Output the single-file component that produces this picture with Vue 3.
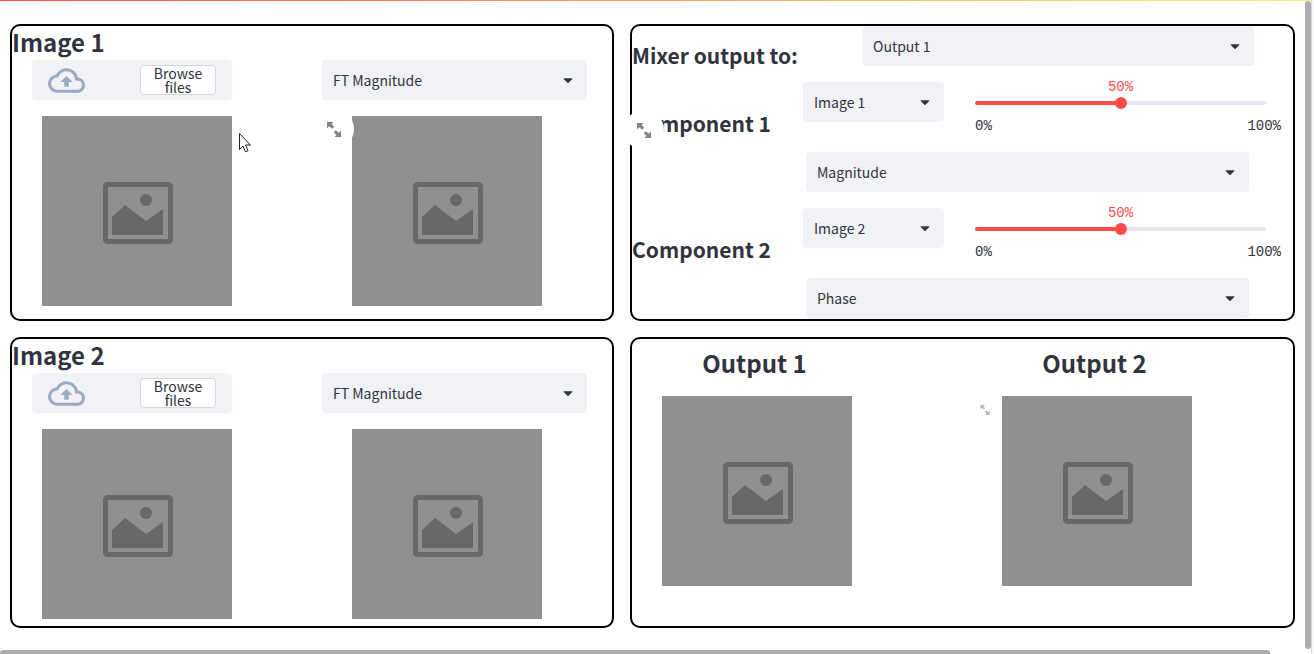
<script setup>
import { reactive } from 'vue'

const images = reactive([
  { title: 'Image 1', view: 'FT Magnitude', expand: true },
  { title: 'Image 2', view: 'FT Magnitude', expand: false },
])
const views = ['FT Magnitude', 'FT Phase', 'FT Real', 'FT Imaginary']
const outputs = ['Output 1', 'Output 2']
const parts = ['Magnitude', 'Phase', 'Real', 'Imaginary']
const mixer = reactive({
  target: 'Output 1',
  components: [
    { name: 'Component 1', source: 'Image 1', part: 'Magnitude', ratio: 50 },
    { name: 'Component 2', source: 'Image 2', part: 'Phase', ratio: 50 },
  ],
})
const caret =
  'M12.7 15.3L17.15 10.85C17.46 10.54 17.24 10 16.8 10L7.2 10C6.76 10 6.54 10.54 6.85 10.85L11.3 15.3C11.68 15.68 12.32 15.68 12.7 15.3Z'
const expandIcon = 'M0 0H6.5L4.6 1.9L7.2 4.8L5.2 6.8L2.2 4.2L0 6.5ZM14 15H7.5L9.4 13.1L6.8 10.2L8.8 8.2L11.8 10.8L14 8.5Z'
const cloud =
  'M19.35 10.04A7.49 7.49 0 0012 4C9.11 4 6.6 5.64 5.35 8.04A5.994 5.994 0 000 14c0 3.31 2.69 6 6 6h13c2.76 0 5-2.24 5-5 0-2.64-2.05-4.78-4.65-4.96zM19 18H6c-2.21 0-4-1.79-4-4 0-2.05 1.53-3.76 3.56-3.97l1.07-.11.5-.95A5.469 5.469 0 0112 6c2.62 0 4.88 1.86 5.39 4.43l.3 1.5 1.53.11A2.98 2.98 0 0122 15c0 1.65-1.35 3-3 3zM8 13h2.55v3h2.9v-3H16l-4-4z'
</script>

<template>
  <div class="page">
    <div class="decoration"></div>
    <main class="board">
      <div class="column">
        <section v-for="image in images" :key="image.title" class="panel source">
          <h2>{{ image.title }}</h2>
          <div class="halves">
            <div class="half">
              <div class="uploader">
                <svg class="cloud" viewBox="0 0 24 24"><path :d="cloud" /></svg>
                <button type="button" class="browse">Browse files</button>
              </div>
              <div class="picture original">
                <svg viewBox="0 0 70 62">
                  <rect x="2.5" y="2.5" width="65" height="57" rx="2" />
                  <circle cx="43" cy="18" r="6" />
                  <path d="M9 35L22 23L43 39L60 27V53H9Z" />
                </svg>
              </div>
            </div>
            <div class="half">
              <div class="select">
                <select v-model="image.view" :aria-label="image.title + ' view'">
                  <option v-for="v in views" :key="v">{{ v }}</option>
                </select>
                <svg viewBox="0 0 24 24"><path :d="caret" /></svg>
              </div>
              <div class="picture transformed">
                <svg viewBox="0 0 70 62">
                  <rect x="2.5" y="2.5" width="65" height="57" rx="2" />
                  <circle cx="43" cy="18" r="6" />
                  <path d="M9 35L22 23L43 39L60 27V53H9Z" />
                </svg>
                <button v-if="image.expand" type="button" class="expand before" aria-label="View fullscreen">
                  <svg viewBox="0 0 14 15"><path :d="expandIcon" /></svg>
                </button>
              </div>
            </div>
          </div>
        </section>
      </div>

      <div class="column">
        <section class="panel mixer">
          <div class="target">
            <label for="target">Mixer output to:</label>
            <div class="select">
              <select id="target" v-model="mixer.target">
                <option v-for="o in outputs" :key="o">{{ o }}</option>
              </select>
              <svg viewBox="0 0 24 24"><path :d="caret" /></svg>
            </div>
          </div>
          <div v-for="c in mixer.components" :key="c.name" class="component">
            <h3>{{ c.name }}</h3>
            <div class="settings">
              <div class="blend">
                <div class="select">
                  <select v-model="c.source" :aria-label="c.name + ' source'">
                    <option v-for="i in images" :key="i.title">{{ i.title }}</option>
                  </select>
                  <svg viewBox="0 0 24 24"><path :d="caret" /></svg>
                </div>
                <div class="slider">
                  <output>{{ c.ratio }}%</output>
                  <input
                    v-model="c.ratio"
                    type="range"
                    min="0"
                    max="100"
                    :aria-label="c.name + ' ratio'"
                    :style="{ '--filled': c.ratio + '%' }"
                  />
                  <div class="ticks"><span>0%</span><span>100%</span></div>
                </div>
              </div>
              <div class="select part">
                <select v-model="c.part" :aria-label="c.name + ' part'">
                  <option v-for="p in parts" :key="p">{{ p }}</option>
                </select>
                <svg viewBox="0 0 24 24"><path :d="caret" /></svg>
              </div>
            </div>
          </div>
          <button type="button" class="expand edge" aria-label="View fullscreen">
            <svg viewBox="0 0 14 15"><path :d="expandIcon" /></svg>
          </button>
        </section>

        <section class="panel results">
          <div v-for="(o, n) in outputs" :key="o" class="result">
            <h2>{{ o }}</h2>
            <div class="picture">
              <svg viewBox="0 0 70 62">
                <rect x="2.5" y="2.5" width="65" height="57" rx="2" />
                <circle cx="43" cy="18" r="6" />
                <path d="M9 35L22 23L43 39L60 27V53H9Z" />
              </svg>
              <button v-if="n === 1" type="button" class="expand faded" aria-label="View fullscreen">
                <svg viewBox="0 0 14 15"><path :d="expandIcon" /></svg>
              </button>
            </div>
          </div>
        </section>
      </div>
    </main>
    <div class="bar vertical"></div>
    <div class="bar horizontal"></div>
    <div class="gutter"></div>
    <svg class="pointer" viewBox="0 0 12 20">
      <path d="M0.5 0.5V16.5L4 13L6.5 18.8L9 17.7L6.6 12H11.5Z" />
    </svg>
  </div>
</template>

<style>
body {
  background: #fff;
}
</style>

<style scoped>
.page,
.page * {
  box-sizing: border-box;
}
.page {
  position: relative;
  min-height: 100vh;
  color: #31333f;
  font-family: 'Noto Sans CJK JP', 'Noto Sans', sans-serif;
  font-size: 14px;
}
.decoration {
  height: 1px;
  margin-right: 3px;
  background: linear-gradient(90deg, #ff4b4b, #ffec7c);
}
.board {
  display: grid;
  grid-template-columns: 604fr 665fr;
  gap: 16px;
  padding: 23px 19px 26px 10px;
}
.column {
  display: grid;
  grid-template-rows: minmax(297px, auto) minmax(291px, auto);
  align-content: start;
  gap: 16px;
}
.panel {
  position: relative;
  border: 2px solid #000;
  border-radius: 10px;
}
h2,
h3 {
  margin: 0;
}
h2 {
  height: 34px;
  font-size: 24px;
  font-weight: 700;
  line-height: 32px;
}
h3,
.target label {
  font-size: 21px;
  font-weight: 700;
  line-height: 28px;
}
.halves {
  display: grid;
  grid-template-columns: 1fr 1fr;
  gap: 25px;
  padding: 0 25px 0 20px;
}
.half {
  display: flex;
  flex-direction: column;
  gap: 16px;
}
.uploader {
  display: flex;
  align-items: center;
  justify-content: space-between;
  width: 200px;
  height: 40px;
  padding: 0 16px;
  border-radius: 4px;
  background: #f0f2f6;
}
.cloud {
  width: 37px;
  height: 37px;
  fill: #9aa9c5;
}
.browse {
  width: 76px;
  height: 30px;
  padding: 0 8px;
  border: 1px solid #d6d7db;
  border-radius: 4px;
  background: #fff;
  color: inherit;
  font: inherit;
  line-height: 14px;
}
.select {
  position: relative;
  height: 40px;
}
.select select {
  width: 100%;
  height: 100%;
  padding: 0 32px 0 11px;
  appearance: none;
  border: 0;
  border-radius: 4px;
  background: #f0f2f6;
  color: inherit;
  font: inherit;
}
.select svg {
  position: absolute;
  top: 10px;
  right: 9px;
  width: 20px;
  height: 20px;
  fill: #31333f;
  pointer-events: none;
}
.picture {
  position: relative;
  display: grid;
  place-items: center;
  width: 190px;
  height: 190px;
  padding: 4px 0 0 2px;
  background: #909090;
}
.picture > svg {
  width: 70px;
  height: 62px;
  fill: #686868;
}
.picture rect {
  fill: none;
  stroke: #686868;
  stroke-width: 5;
}
.original {
  margin-left: 10px;
}
.transformed {
  margin-left: 30px;
}
.expand {
  position: absolute;
  display: grid;
  place-items: center;
  width: 40px;
  height: 40px;
  padding: 0;
  border: 0;
  border-radius: 50%;
  background: #fff;
}
.expand svg {
  width: 14px;
  height: 15px;
  fill: #808388;
}
.before {
  top: -7px;
  left: -38px;
}
.edge {
  top: 84px;
  left: -8px;
}
.faded {
  top: -6px;
  left: -37px;
  background: none;
}
.faded svg {
  width: 10px;
  height: 10px;
  fill: #b4b5b9;
}
.target {
  display: flex;
  height: 40px;
}
.target label {
  width: 230px;
  padding-top: 15px;
}
.target .select {
  flex: 1;
  margin-right: 39px;
}
.component {
  display: grid;
  grid-template-columns: 171px 1fr;
  align-items: center;
  padding-top: 16px;
}
.component h3 {
  padding-bottom: 28px;
}
.blend {
  display: grid;
  grid-template-columns: 141px 1fr;
  gap: 31px;
  height: 70px;
  padding-right: 27px;
}
.part {
  margin: 0 44px 0 3px;
}
.slider {
  display: flex;
  flex-direction: column;
  font-family: 'Liberation Mono', monospace;
}
.slider output {
  color: #ff4b4b;
  line-height: 10px;
  text-align: center;
}
.slider input {
  appearance: none;
  width: 100%;
  height: 12px;
  margin: 5px 0 9px;
  background: none;
}
.slider input::-webkit-slider-runnable-track {
  height: 4px;
  border-radius: 4px;
  background: linear-gradient(90deg, #ff4b4b var(--filled), #e6e8ef var(--filled));
}
.slider input::-webkit-slider-thumb {
  appearance: none;
  width: 12px;
  height: 12px;
  margin-top: -4px;
  border-radius: 50%;
  background: #ff4b4b;
}
.ticks {
  display: flex;
  justify-content: space-between;
  margin-right: -15px;
  line-height: 16px;
}
.results {
  display: grid;
  grid-template-columns: 1fr 1fr;
  gap: 49px;
  padding-left: 30px;
}
.result h2 {
  width: 185px;
  height: 57px;
  line-height: 48px;
  text-align: center;
}
.bar {
  position: absolute;
  border-radius: 3px;
  background: #adadb3;
}
.vertical {
  top: 1px;
  right: 3px;
  bottom: 5px;
  width: 6px;
}
.horizontal {
  right: 44px;
  bottom: 0;
  left: 0;
  height: 4px;
  border-radius: 3px 3px 0 0;
}
.gutter {
  position: absolute;
  top: 0;
  right: 0;
  bottom: 0;
  width: 3px;
  border-left: 1px solid #d8d8dc;
  background: #fafafa;
}
.pointer {
  position: absolute;
  top: 133px;
  left: 239px;
  width: 12px;
  height: 20px;
  fill: #fff;
  stroke: #222;
}
</style>
